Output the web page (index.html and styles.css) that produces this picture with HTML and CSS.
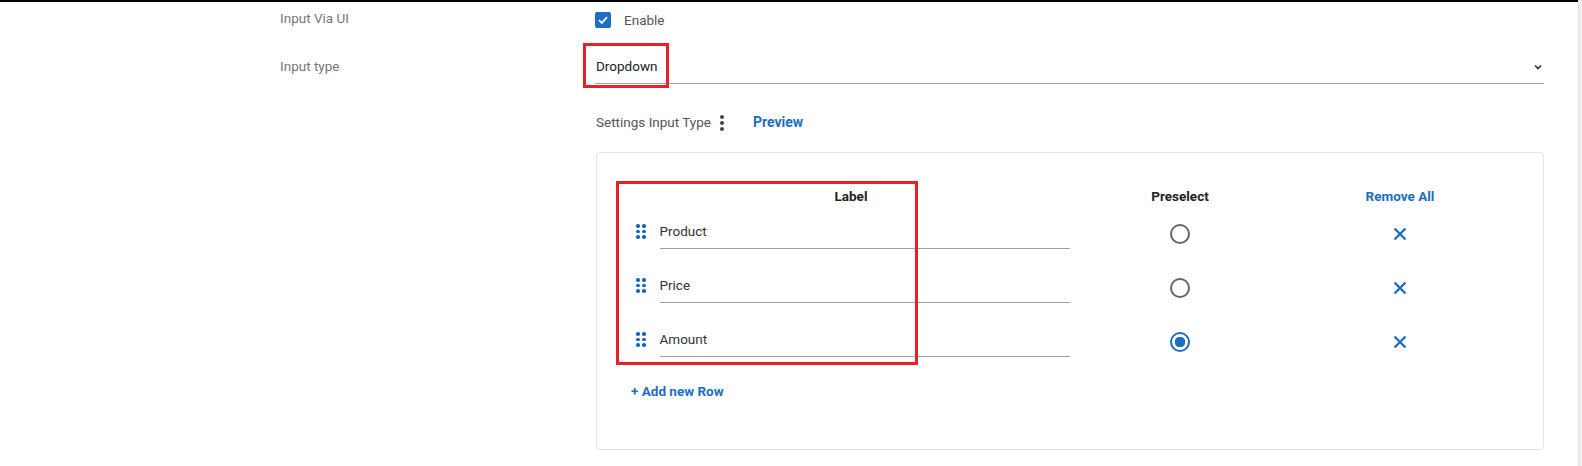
FILE: index.html
```html
<!DOCTYPE html>
<html>
<head>
<meta charset="utf-8">
<link rel="stylesheet" href="styles.css">
</head>
<body>
<div class="page">
  <main class="main">
    <div class="form-row row-enable">
      <div class="field-label">Input Via UI</div>
      <div class="field-value">
        <label class="checkbox">
          <span class="box"><svg width="12" height="12" viewBox="0 0 12 12"><path d="M2 6.2 L4.8 9 L10 3.2" fill="none" stroke="#fff" stroke-width="1.8"/></svg></span>
          <span class="check-text">Enable</span>
        </label>
      </div>
    </div>
    <div class="form-row row-type">
      <div class="field-label">Input type</div>
      <div class="field-value">
        <div class="select">
          <span class="select-text">Dropdown</span>
          <svg class="chevron" width="8" height="6" viewBox="0 0 8 6"><path d="M1 1.5 L4 4.5 L7 1.5" fill="none" stroke="#333" stroke-width="1.6"/></svg>
          <span class="highlight hl-select"></span>
        </div>
      </div>
    </div>
    <div class="form-row row-settings">
      <div class="field-label"></div>
      <div class="field-value">
        <div class="settings-bar">
          <span class="settings-text">Settings Input Type</span>
          <span class="kebab"><i></i><i></i><i></i></span>
          <span class="preview">Preview</span>
        </div>
        <div class="card">
          <span class="highlight hl-labels"></span>
          <div class="grid">
            <div class="head head-label">Label</div>
            <div class="head">Preselect</div>
            <div class="head link">Remove All</div>

            <div class="cell-label">
              <span class="handle"><i></i><i></i><i></i><i></i><i></i><i></i></span>
              <span class="input">Product</span>
            </div>
            <div class="cell-center"><span class="radio"></span></div>
            <div class="cell-center"><svg class="remove" width="14" height="14" viewBox="0 0 14 14"><path d="M1.5 1.5 L12.5 12.5 M12.5 1.5 L1.5 12.5" stroke="#1b6ec2" stroke-width="2.4"/></svg></div>

            <div class="cell-label">
              <span class="handle"><i></i><i></i><i></i><i></i><i></i><i></i></span>
              <span class="input">Price</span>
            </div>
            <div class="cell-center"><span class="radio"></span></div>
            <div class="cell-center"><svg class="remove" width="14" height="14" viewBox="0 0 14 14"><path d="M1.5 1.5 L12.5 12.5 M12.5 1.5 L1.5 12.5" stroke="#1b6ec2" stroke-width="2.4"/></svg></div>

            <div class="cell-label">
              <span class="handle"><i></i><i></i><i></i><i></i><i></i><i></i></span>
              <span class="input">Amount</span>
            </div>
            <div class="cell-center"><span class="radio checked"></span></div>
            <div class="cell-center"><svg class="remove" width="14" height="14" viewBox="0 0 14 14"><path d="M1.5 1.5 L12.5 12.5 M12.5 1.5 L1.5 12.5" stroke="#1b6ec2" stroke-width="2.4"/></svg></div>
          </div>
          <div class="add-row">+ Add new Row</div>
        </div>
      </div>
    </div>
  </main>
  <div class="scrollstrip"></div>
</div>
</body>
</html>
```

FILE: styles.css
```css
* { box-sizing: border-box; }
html, body { margin: 0; padding: 0; background: #fff; }
body {
  font-family: Roboto, "Liberation Sans", Arial, sans-serif;
  font-size: 13.5px;
  color: #333;
}
.page {
  display: flex;
  width: 1582px;
  height: 466px;
  overflow: hidden;
}
.main {
  flex: 1;
  border-top: 2px solid #000;
  padding: 0 34px 0 280px;
}
.scrollstrip {
  width: 5px;
  background: #efefef;
  border-left: 1px solid #e2e2e2;
}
.form-row {
  display: grid;
  grid-template-columns: 315px 1fr;
}
.field-label {
  color: #777;
  line-height: 16px;
}
.row-enable { height: 40px; }
.row-enable .field-label { padding-top: 8px; }
.row-enable .field-value { padding-top: 10px; }
.checkbox { display: flex; align-items: center; gap: 13px; }
.box {
  width: 16px; height: 16px;
  background: #1b6ec2;
  border-radius: 2px;
  display: flex; align-items: center; justify-content: center;
}
.check-text { color: #555; line-height: 16px; }

.row-type { height: 65px; }
.row-type .field-label { padding-top: 16px; }
.select {
  position: relative;
  display: flex;
  align-items: center;
  justify-content: space-between;
  height: 42px;
  padding-top: 7px;
  border-bottom: 1px solid #a0a0a0;
  padding-right: 2px;
}
.select-text { color: #222; padding-left: 1px; }
.chevron { margin-top: 2px; }
.highlight {
  position: absolute;
  border: 3px solid #e8202a;
  pointer-events: none;
}
.hl-select { left: -12px; top: 1px; width: 86px; height: 45px; }

.settings-bar {
  display: flex;
  align-items: center;
  height: 28px;
  margin-top: 1px;
}
.settings-text { color: #555; padding-left: 1px; }
.kebab {
  display: flex; flex-direction: column; gap: 2px;
  margin-left: 9px; margin-top: 2px;
}
.kebab i { width: 4px; height: 4px; border-radius: 50%; background: #444; display: block; }
.preview { color: #1b6ec2; font-weight: 700; margin-left: 29px; font-size: 14px; }

.card {
  position: relative;
  margin-top: 16px;
  margin-left: 1px;
  height: 298px;
  border: 1px solid #e3e3e3;
  border-radius: 4px;
  padding: 32px 33px 0 39px;
}
.hl-labels { left: 19px; top: 28px; width: 302px; height: 184px; }
.grid {
  display: grid;
  grid-template-columns: 434px 220px 220px;
  grid-template-rows: 20px 54px 54px 54px;
}
.head {
  font-weight: 700;
  color: #222;
  text-align: center;
  line-height: 20px;
  padding-top: 1px;
}
.head-label { padding-right: 4px; }
.head.link { color: #1b6ec2; }
.cell-label { display: flex; align-items: center; }
.handle {
  display: grid;
  grid-template-columns: 3.5px 3.5px;
  gap: 2px 2.5px;
  margin-right: 14px;
  margin-top: -1px;
}
.handle i { width: 3.5px; height: 3.5px; background: #1565c0; border-radius: 50%; display: block; }
.input {
  flex: 1;
  height: 33px;
  padding-top: 7px;
  line-height: 16px;
  border-bottom: 1px solid #a0a0a0;
  color: #333;
  margin-top: 1px;
}
.cell-center { display: flex; align-items: center; justify-content: center; }
.radio {
  width: 20px; height: 20px;
  border-radius: 50%;
  border: 2px solid #666;
  display: block;
  margin-top: 4px;
}
.radio.checked {
  border-color: #1b6ec2;
  background: radial-gradient(circle, #1b6ec2 0 5px, #fff 5.5px);
}
.remove { margin-top: 4px; }
.add-row {
  color: #1b6ec2;
  font-weight: 700;
  margin-top: 14px;
  margin-left: -5px;
  line-height: 20px;
}
```
